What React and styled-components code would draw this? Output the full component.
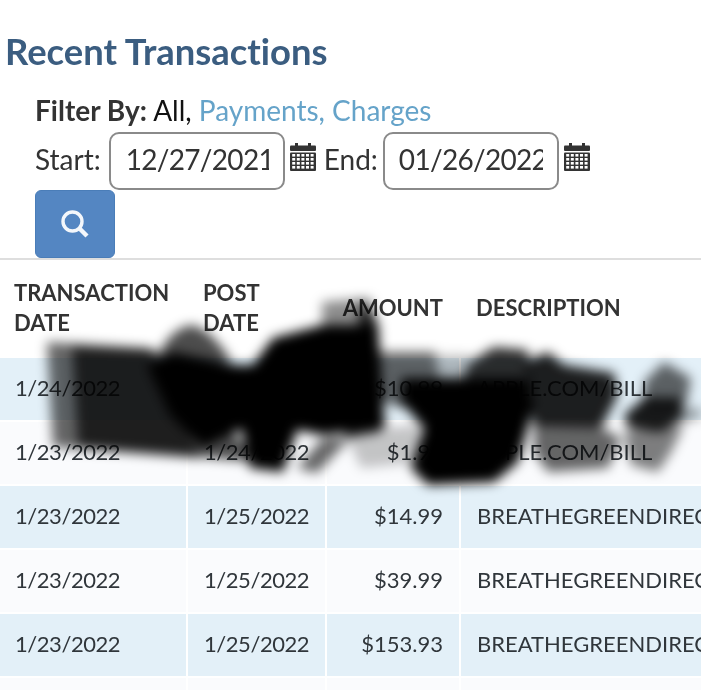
import styled, { createGlobalStyle } from "styled-components";

const GlobalStyle = createGlobalStyle`
  html, body {
    margin: 0;
    padding: 0;
    background: #fff;
  }
  body {
    font-family: Lato, "Open Sans", sans-serif;
    font-variant-ligatures: none;
    color: #333;
    overflow: hidden;
  }
`;

const Page = styled.div`
  position: relative;
  width: 701px;
  height: 690px;
  overflow: hidden;
`;

const Title = styled.h1`
  margin: 0;
  padding: 30px 0 0 5px;
  height: 60px;
  font-size: 36.4px;
  line-height: 42px;
  font-weight: 700;
  color: #3b5d80;
`;

const FilterPanel = styled.div`
  padding-left: 35px;
`;

const FilterLine = styled.div`
  height: 42px;
  font-size: 28px;
  line-height: 41px;
  color: #111;
  white-space: nowrap;
`;

const FilterLabel = styled.b`
  color: #333;
`;

const FilterLink = styled.a`
  color: #65a3c9;
`;

const DateRow = styled.div`
  display: flex;
  align-items: center;
  height: 58px;
  font-size: 28px;
  color: #333;
`;

const DateLabel = styled.span`
  margin-bottom: 5px;
`;

const DateInput = styled.input`
  box-sizing: border-box;
  width: 176px;
  height: 58px;
  margin-left: ${(props) => props.$gap}px;
  padding: 0 14px 4px ${(props) => props.$pad}px;
  border: 2px solid #8a8a8a;
  border-radius: 10px;
  background: #fff;
  font-family: inherit;
  font-size: 28px;
  letter-spacing: -0.7px;
  color: #333;
  outline: none;
`;

const CalendarSvg = styled.svg`
  flex: none;
  width: 26px;
  height: 28px;
  margin: -8px 8px 0 5px;
`;

const SearchButton = styled.button`
  display: flex;
  align-items: center;
  justify-content: center;
  width: 80px;
  height: 68px;
  padding: 0;
  border: 1px solid #4a7db8;
  border-radius: 6px;
  background: #5486c2;
`;

const Rule = styled.div`
  height: 2px;
  background: #dedede;
`;

const Table = styled.table`
  width: 760px;
  table-layout: fixed;
  border-collapse: collapse;
  font-size: 22px;
`;

const HeadCell = styled.th`
  height: 96px;
  padding: 0 ${(props) => (props.$right ? 17 : 0)}px 0 ${(props) => props.$pad || 16}px;
  border: 0;
  text-align: ${(props) => (props.$right ? "right" : "left")};
  font-weight: 700;
  line-height: 30px;
  color: #333;
`;

const Row = styled.tr`
  background: ${(props) => (props.$alt ? "#fafbfd" : "#e3f0f8")};
`;

const Cell = styled.td`
  height: 59px;
  padding: 0 ${(props) => (props.$right ? 16 : 0)}px 3px ${(props) => props.$pad || 16}px;
  border: 2px solid #fff;
  text-align: ${(props) => (props.$right ? "right" : "left")};
  letter-spacing: ${(props) => (props.$tight ? "-0.45px" : "0")};
  white-space: nowrap;
  overflow: hidden;
  color: #30363b;
  &:first-child {
    border-left: 0;
  }
`;

const Smear = styled.svg`
  position: absolute;
  left: 0;
  top: 0;
  width: 701px;
  height: 690px;
  mix-blend-mode: multiply;
  pointer-events: none;
`;

const rows = [
  { date: "1/24/2022", post: "1/24/2022", amount: "$10.99", desc: "APPLE.COM/BILL" },
  { date: "1/23/2022", post: "1/24/2022", amount: "$1.99", desc: "APPLE.COM/BILL" },
  { date: "1/23/2022", post: "1/25/2022", amount: "$14.99", desc: "BREATHEGREENDIREC" },
  { date: "1/23/2022", post: "1/25/2022", amount: "$39.99", desc: "BREATHEGREENDIREC" },
  { date: "1/23/2022", post: "1/25/2022", amount: "$153.93", desc: "BREATHEGREENDIREC" },
  { date: "", post: "", amount: "", desc: "" },
];

// strokes of the marker that was scribbled over the screenshot
const strokes = [
  { d: "M322 302 L370 298 L380 330 L322 335 Z", o: 0.45 },
  { d: "M47 342 L150 348 L200 458 L53 447 Z", o: 0.6 },
  { d: "M72 346 L155 350 L260 462 L78 447 Z", o: 0.7 },
  { d: "M157 358 Q170 328 192 325 Q212 330 232 362 Z", o: 0.7 },
  { d: "M147 365 L173 352 L250 368 L250 425 L203 448 L170 415 Z", o: 1 },
  { d: "M240 382 L273 338 L323 325 L378 325 L385 428 L323 435 L297 430 L283 472 L250 468 L240 422 Z", o: 1 },
  { d: "M170 365 L380 365 L380 415 L205 430 Z", o: 1 },
  { d: "M297 468 L323 438 L350 438 L317 473 Z", o: 0.6 },
  { d: "M361 300 L376 320 L380 432 L345 438 Z", o: 0.8 },
  { d: "M378 352 L435 352 L441 405 L400 408 L380 400 Z", o: 0.6 },
  { d: "M345 432 L420 425 L420 462 L361 468 Z", o: 0.22 },
  { d: "M435 355 L470 355 L470 380 L435 380 Z", o: 0.25 },
  { d: "M401 378 L521 378 L534 405 L518 462 L494 482 L428 485 L411 468 L424 428 L401 402 Z", o: 1 },
  { d: "M470 380 L530 380 L530 420 L470 430 Z", o: 1 },
  { d: "M464 378 L470 362 L494 347 L528 350 L528 382 Z", o: 0.82 },
  { d: "M524 362 L548 352 L564 365 L614 373 L618 395 L601 428 L534 425 Z", o: 0.88 },
  { d: "M534 420 L601 428 L621 438 L608 468 L548 472 L534 452 Z", o: 0.6 },
  { d: "M644 382 L664 362 L691 378 L686 405 L644 405 Z", o: 0.6 },
  { d: "M624 415 L644 398 L681 398 L684 418 L661 432 L628 428 Z", o: 0.9 },
  { d: "M624 432 L684 425 L671 452 L658 472 L631 465 Z", o: 0.5 },
  { d: "M684 408 L701 408 L701 418 L684 422 Z", o: 0.35 },
];

const CalendarIcon = () => {
  const cells = [];
  for (let r = 0; r < 4; r++) {
    for (let c = 0; c < 5; c++) {
      cells.push(<rect key={`${r}-${c}`} x={2.2 + c * 4.6} y={11 + r * 4} width="3" height="2.6" fill="#fff" />);
    }
  }
  return (
    <CalendarSvg viewBox="0 0 26 28">
      <rect x="5" y="0" width="3" height="5" fill="#333" />
      <rect x="18" y="0" width="3" height="5" fill="#333" />
      <rect x="0" y="2.5" width="26" height="5.5" rx="1" fill="#333" />
      <rect x="0" y="9.5" width="26" height="18.5" rx="1" fill="#333" />
      {cells}
    </CalendarSvg>
  );
};

const App = () => {
  return (
    <Page>
      <GlobalStyle />
      <Title>Recent Transactions</Title>
      <FilterPanel>
        <FilterLine>
          <FilterLabel>Filter By:</FilterLabel> All, <FilterLink>Payments, Charges</FilterLink>
        </FilterLine>
        <DateRow>
          <DateLabel>Start:</DateLabel>
          <DateInput readOnly value="12/27/2021" $gap={8} $pad={15} />
          <CalendarIcon />
          <DateLabel>End:</DateLabel>
          <DateInput readOnly value="01/26/2022" $gap={5} $pad={14} />
          <CalendarIcon />
        </DateRow>
        <SearchButton>
          <svg width="32" height="32" viewBox="0 0 32 32" fill="none" stroke="#f4f7fb">
            <circle cx="13.5" cy="13.5" r="9.5" strokeWidth="3.4" />
            <path d="M20.5 20.5 L28 28" strokeWidth="4.4" />
          </svg>
        </SearchButton>
      </FilterPanel>
      <Rule />
      <Table>
        <colgroup>
          <col width="187" />
          <col width="139" />
          <col width="134" />
          <col width="300" />
        </colgroup>
        <thead>
          <tr>
            <HeadCell $pad={14}>TRANSACTION<br />DATE</HeadCell>
            <HeadCell>POST<br />DATE</HeadCell>
            <HeadCell $right>AMOUNT</HeadCell>
            <HeadCell>DESCRIPTION</HeadCell>
          </tr>
        </thead>
        <tbody>
          {rows.map((row, i) => (
            <Row key={i} $alt={i % 2 === 1}>
              <Cell $pad={15} $tight>{row.date}</Cell>
              <Cell $tight>{row.post}</Cell>
              <Cell $right>{row.amount}</Cell>
              <Cell>{row.desc}</Cell>
            </Row>
          ))}
        </tbody>
      </Table>
      <Smear viewBox="0 0 701 690">
        <defs>
          <filter id="soft" filterUnits="userSpaceOnUse" x="0" y="250" width="701" height="300">
            <feGaussianBlur stdDeviation="6" />
          </filter>
        </defs>
        <g filter="url(#soft)">
          {strokes.map((s, i) => (
            <path key={i} d={s.d} fill="#000" fillOpacity={s.o} />
          ))}
        </g>
      </Smear>
    </Page>
  );
};

export default App;
